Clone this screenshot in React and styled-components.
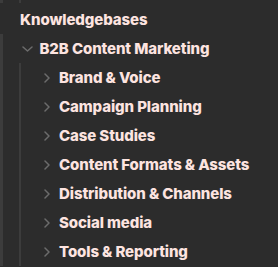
import React from "react";
import styled, { createGlobalStyle } from "styled-components";

const Global = createGlobalStyle`
  html, body { margin: 0; padding: 0; background: #2c2c2c; }
  body { width: 278px; height: 267px; overflow: hidden; }
`;

const GUIDE = "#3c3c3c";

const Panel = styled.div`
  width: 278px;
  height: 267px;
  overflow: hidden;
  background: #2c2c2c;
  font-family: Inter, "Noto Sans", sans-serif;
  font-weight: 800;
  font-size: 15px;
  color: #fde4e0;
`;

const guideBg = (x, w) => `
  background-image: linear-gradient(${GUIDE}, ${GUIDE});
  background-repeat: no-repeat;
  background-size: ${w}px 100%;
  background-position: ${x}px 0;
`;

const TopStub = styled.div`
  height: 5px;
  background-image: linear-gradient(${GUIDE}, ${GUIDE}), linear-gradient(${GUIDE}, ${GUIDE});
  background-repeat: no-repeat;
  background-size: 3px 3px, 2px 3px;
  background-position: 0 0, 19px 0;
`;

const Group = styled.div`
  ${(p) => guideBg(p.$guideX, p.$guideW)}
`;

const Row = styled.div`
  display: flex;
  align-items: center;
  height: 29px;
  line-height: 29px;
  padding-left: ${(p) => p.$indent}px;
  white-space: nowrap;
`;

const ChevronSlot = styled.span`
  display: flex;
  align-items: center;
  justify-content: center;
  width: 14px;
  height: 29px;
  margin-right: 5.5px;
  flex: none;
`;

const Label = styled.span`
  letter-spacing: -0.1px;
`;

const ChevronRight = () => (
  <svg width="6" height="10" viewBox="0 0 6 10" style={{ marginTop: 1 }}>
    <polyline points="1,1 5,5 1,9" fill="none" stroke="#6c6c6c" strokeWidth="1.5" strokeLinecap="round" strokeLinejoin="round" />
  </svg>
);

const ChevronDown = () => (
  <svg width="11" height="6" viewBox="0 0 11 6" style={{ marginTop: 1 }}>
    <polyline points="1,1 5.5,5 10,1" fill="none" stroke="#6c6c6c" strokeWidth="1.5" strokeLinecap="round" strokeLinejoin="round" />
  </svg>
);

const children = [
  "Brand & Voice",
  "Campaign Planning",
  "Case Studies",
  "Content Formats & Assets",
  "Distribution & Channels",
  "Social media",
  "Tools & Reporting",
];

export default function App() {
  return (
    <Panel>
      <Global />
      <TopStub />
      <Row $indent={20}>
        <Label>Knowledgebases</Label>
      </Row>
      <Group $guideX={0} $guideW={3}>
        <Row $indent={20}>
          <ChevronSlot>
            <ChevronDown />
          </ChevronSlot>
          <Label>B2B Content Marketing</Label>
        </Row>
        <Group $guideX={19} $guideW={2}>
          {children.map((c) => (
            <Row key={c} $indent={39.5}>
              <ChevronSlot>
                <ChevronRight />
              </ChevronSlot>
              <Label>{c}</Label>
            </Row>
          ))}
        </Group>
      </Group>
    </Panel>
  );
}
